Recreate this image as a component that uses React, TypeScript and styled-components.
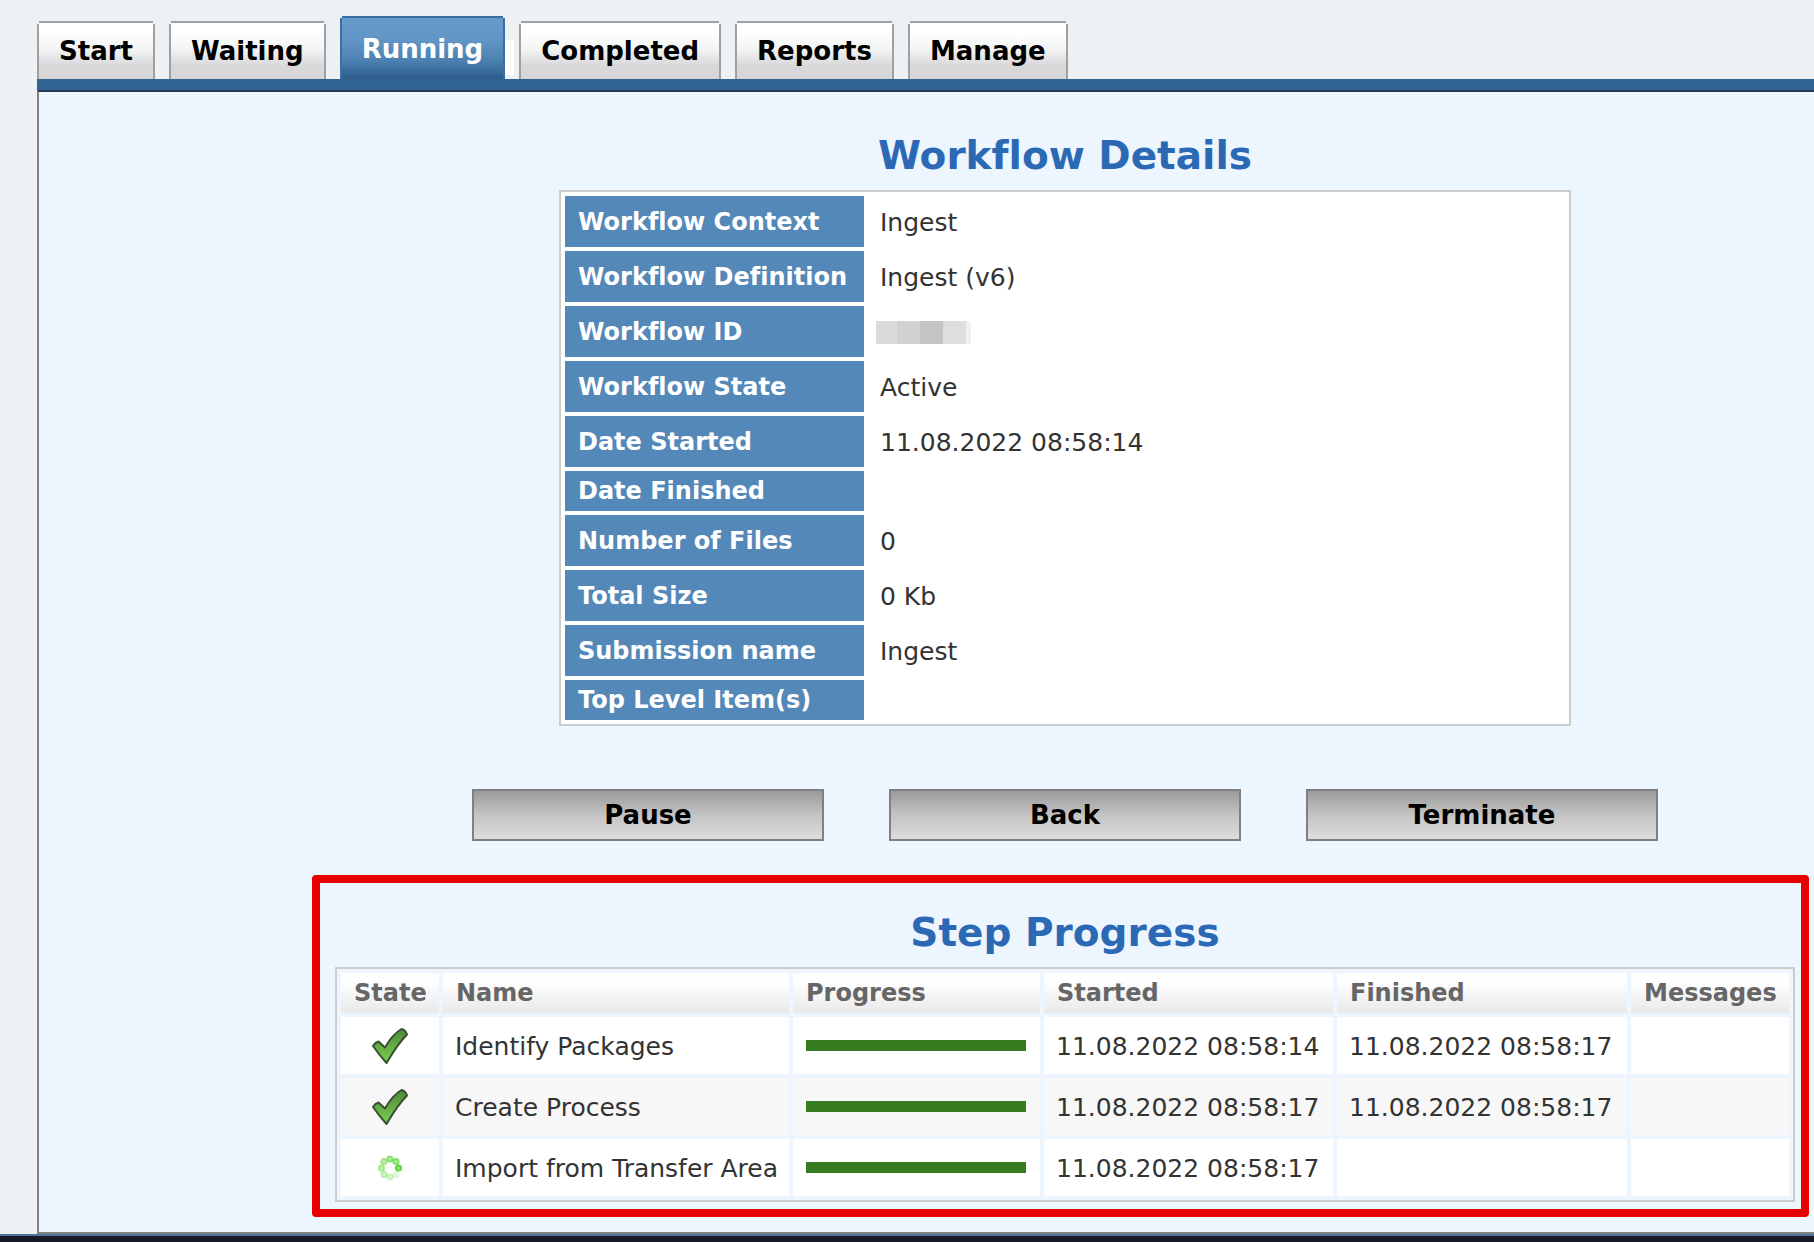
import React from "react";
import styled, { createGlobalStyle, css } from "styled-components";

const GlobalStyle = createGlobalStyle`
  *, *::before, *::after { box-sizing: border-box; }
  body {
    margin: 0;
    background: #edf1f3;
    color: #333;
    font-family: Verdana, "DejaVu Sans", sans-serif;
    font-size: 24px;
    line-height: 28px;
    font-variant-ligatures: none;
  }
`;

const Page = styled.div`
  min-height: 100vh;
  display: flex;
  flex-direction: column;
`;

const TabBar = styled.nav`
  display: flex;
  align-items: flex-end;
  gap: 14px;
  height: 79px;
  margin-left: 37px;
`;

const Tab = styled.a<{ $active?: boolean }>`
  position: relative;
  display: flex;
  justify-content: center;
  height: 55px;
  padding: 13px 20px 0;
  border: solid #a0a0a0;
  border-width: 0 2px;
  background: linear-gradient(#fff 15%, #f3f4f4 45%, #d8d8da 76%, #d6d6d8);
  color: #000;
  font-size: 26px;
  font-weight: bold;
  text-decoration: none;

  &::before {
    content: "";
    position: absolute;
    top: -3px;
    left: 0;
    right: 0;
    height: 3px;
    border-top: 2px solid #a0a0a0;
    background: #fff;
  }

  ${(p) =>
    p.$active &&
    css`
      height: 61px;
      padding-top: 17px;
      border-color: #3a6ea5;
      background: linear-gradient(#669bca, #6196c6 35%, #4b80b1 70%, #2b5c8b);
      color: #fff;

      &::before {
        top: -2px;
        height: 2px;
        border-color: #3a6ea5;
      }

      &::after {
        content: "";
        position: absolute;
        left: calc(100% + 2px);
        bottom: 4px;
        width: 9px;
        height: 35px;
        background: #fff;
      }
    `}
`;

const Strip = styled.div`
  height: 11px;
  margin-left: 37px;
  background: #316492;
`;

const Panel = styled.main`
  flex: 1;
  margin-left: 37px;
  padding: 41px 5px 14px 273px;
  border: solid #808080;
  border-width: 2px 0 2px 2px;
  border-top-color: #26375a;
  background: #edf5ff;
`;

const Footer = styled.footer`
  height: 8px;
  border-top: 2px solid #4f7299;
  background: #181b27;
`;

const Details = styled.section`
  display: flex;
  flex-direction: column;
  align-items: center;
  padding-left: 9px;
`;

const Heading = styled.h2`
  margin: 0;
  color: #2b69b5;
  font-size: 39px;
  line-height: 46px;
  font-weight: bold;
  text-align: center;
`;

const DetailTable = styled.table`
  width: 100%;
  max-width: 1012px;
  margin-top: 11px;
  border: 2px solid #ccc;
  border-collapse: separate;
  border-spacing: 4px;
  background: #fff;
`;

const DetailRow = styled.tr<{ $short?: boolean }>`
  height: ${(p) => (p.$short ? 40 : 51)}px;
`;

const DetailLabel = styled.th`
  width: 299px;
  padding: 0 12px 0 13px;
  background: #5388b8;
  color: #fff;
  text-align: left;
  white-space: nowrap;
`;

const DetailValue = styled.td`
  padding: 2px 12px 0;
  font-size: 25px;
`;

const Redacted = styled.span`
  display: block;
  width: 95px;
  height: 23px;
  margin-left: -4px;
  background: linear-gradient(
    to right,
    #dbdbdb 21px,
    #d1d1d1 21px 44px,
    #c4c4c4 44px 67px,
    #dedede 67px 90px,
    #f0f0f0 90px
  );
`;

const Actions = styled.div`
  display: flex;
  justify-content: center;
  gap: 65px;
  margin: 63px 0 34px;
  padding-left: 9px;
`;

const ActionButton = styled.button`
  width: 352px;
  height: 52px;
  padding: 0 0 1px;
  border: 2px solid #808080;
  background: linear-gradient(#9a9a9a, #c4c4c4 50%, #dcdcdc);
  color: #000;
  font: bold 26px/28px Verdana, "DejaVu Sans", sans-serif;
`;

const Highlight = styled.section`
  padding: 27px 6px 7px 15px;
  border: 8px solid #e60000;
  border-radius: 4px;
`;

const StepTable = styled.table`
  width: 100%;
  margin-top: 11px;
  border: 2px solid #ccc;
  border-collapse: separate;
  border-spacing: 4px;
  table-layout: fixed;
`;

const StepHead = styled.th<{ $width?: number }>`
  width: ${(p) => (p.$width ? `${p.$width}px` : "auto")};
  height: 40px;
  padding: 0 12px 0 13px;
  background: linear-gradient(#fff 20%, #e9e9e9);
  color: #666;
  text-align: left;
  white-space: nowrap;
`;

const StepRow = styled.tr`
  height: 57px;
  background: #fff;

  &:nth-child(even) {
    background: #f7f7f7;
  }
`;

const StepCell = styled.td`
  padding: 2px 12px 0;
  font-size: 25px;
  white-space: nowrap;
`;

const IconCell = styled.td`
  padding: 0;

  svg {
    display: block;
    margin: 0 auto;
  }
`;

const ProgressCell = styled.td`
  padding: 0 14px 0 13px;
`;

const ProgressBar = styled.div`
  height: 11px;
  background: #367c21;
`;

const CheckIcon = () => (
  <svg width="38" height="38" viewBox="0 0 38 38" role="img" aria-label="Done">
    <defs>
      <linearGradient id="tick" x1="0" y1="0" x2="0" y2="1">
        <stop offset="0" stopColor="#4d8a3a" />
        <stop offset="0.5" stopColor="#65ab45" />
        <stop offset="1" stopColor="#7cd24e" />
      </linearGradient>
    </defs>
    <path
      d="M2 19 Q4 15.500 7.500 14.500 L14 20.500 C18 13.500 23.500 6 30.500 2 Q34.500 3 36 7.500 C28.500 15 22 25 15.500 36 C11.500 31.500 6.500 25.500 2 19 Z"
      fill="url(#tick)"
      stroke="#38512f"
      strokeWidth="2"
      strokeLinejoin="round"
    />
  </svg>
);

const dots: [number, number, number][] = [
  [21.5, 13, 1],
  [19, 6.5, 0.75],
  [13, 4, 0.7],
  [7, 6.5, 0.6],
  [4.5, 13, 0.56],
  [7, 19.5, 0.44],
  [13, 22, 0.34],
  [19, 19.5, 0.2],
];

const SpinnerIcon = () => (
  <svg width="26" height="26" viewBox="0 0 26 26" role="img" aria-label="Running">
    {dots.map(([x, y, o]) => (
      <circle
        key={`${x}-${y}`}
        cx={x}
        cy={y}
        r="2.6"
        fill="#8fe673"
        stroke="#5fd93a"
        strokeWidth="2"
        opacity={o}
      />
    ))}
  </svg>
);

const tabs = ["Start", "Waiting", "Running", "Completed", "Reports", "Manage"];

const details: [string, React.ReactNode][] = [
  ["Workflow Context", "Ingest"],
  ["Workflow Definition", "Ingest (v6)"],
  ["Workflow ID", <Redacted key="id" />],
  ["Workflow State", "Active"],
  ["Date Started", "11.08.2022 08:58:14"],
  ["Date Finished", null],
  ["Number of Files", "0"],
  ["Total Size", "0 Kb"],
  ["Submission name", "Ingest"],
  ["Top Level Item(s)", null],
];

const steps = [
  { done: true, name: "Identify Packages", started: "11.08.2022 08:58:14", finished: "11.08.2022 08:58:17" },
  { done: true, name: "Create Process", started: "11.08.2022 08:58:17", finished: "11.08.2022 08:58:17" },
  { done: false, name: "Import from Transfer Area", started: "11.08.2022 08:58:17", finished: "" },
];

export default function App() {
  return (
    <Page>
      <GlobalStyle />
      <TabBar>
        {tabs.map((t) => (
          <Tab key={t} href="#" $active={t === "Running"}>
            {t}
          </Tab>
        ))}
      </TabBar>
      <Strip />
      <Panel>
        <Details>
          <Heading>Workflow Details</Heading>
          <DetailTable>
            <tbody>
              {details.map(([label, value]) => (
                <DetailRow key={label} $short={value === null}>
                  <DetailLabel scope="row">{label}</DetailLabel>
                  <DetailValue>{value}</DetailValue>
                </DetailRow>
              ))}
            </tbody>
          </DetailTable>
        </Details>
        <Actions>
          <ActionButton>Pause</ActionButton>
          <ActionButton>Back</ActionButton>
          <ActionButton>Terminate</ActionButton>
        </Actions>
        <Highlight>
          <Heading>Step Progress</Heading>
          <StepTable>
            <thead>
              <tr>
                <StepHead $width={98}>State</StepHead>
                <StepHead $width={346}>Name</StepHead>
                <StepHead $width={247}>Progress</StepHead>
                <StepHead $width={289}>Started</StepHead>
                <StepHead $width={290}>Finished</StepHead>
                <StepHead>Messages</StepHead>
              </tr>
            </thead>
            <tbody>
              {steps.map((s) => (
                <StepRow key={s.name}>
                  <IconCell>{s.done ? <CheckIcon /> : <SpinnerIcon />}</IconCell>
                  <StepCell>{s.name}</StepCell>
                  <ProgressCell>
                    <ProgressBar />
                  </ProgressCell>
                  <StepCell>{s.started}</StepCell>
                  <StepCell>{s.finished}</StepCell>
                  <StepCell />
                </StepRow>
              ))}
            </tbody>
          </StepTable>
        </Highlight>
      </Panel>
      <Footer />
    </Page>
  );
}
